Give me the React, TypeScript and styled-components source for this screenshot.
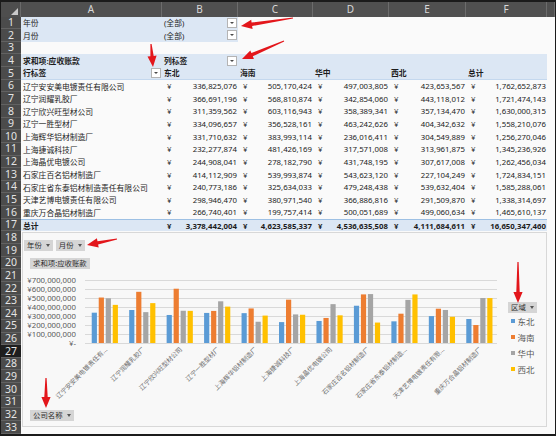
import React from "react";
import styled, { createGlobalStyle, css } from "styled-components";

const GlobalStyle = createGlobalStyle`
  html, body { margin: 0; padding: 0; background: #ffffff; }
  body { font-family: "Noto Sans", "Noto Sans CJK SC", sans-serif; }
`;

const ROW_H = 12.65;
const BLUE = "#dce7f4";

type Row = [string, number[]];

const DATA: Row[] = [
  ["辽宁安安美电镀责任有限公司", [336825076, 505170424, 497003805, 423653567, 1762652873]],
  ["辽宁润耀乳胶厂", [366691196, 568810874, 342854060, 443118012, 1721474143]],
  ["辽宁欣兴旺型材公司", [311359562, 603116943, 358389341, 357134470, 1630000315]],
  ["辽宁一胜型材厂", [334096657, 356528161, 463242626, 404342632, 1558210076]],
  ["上海辉华铝材制造厂", [331710632, 383993114, 236016411, 304549889, 1256270046]],
  ["上海捷诚科技厂", [232277874, 481426169, 317571008, 313961875, 1345236926]],
  ["上海晶优电镀公司", [244908041, 278182790, 431748195, 307617008, 1262456034]],
  ["石家庄百名铝材制造厂", [414112909, 539993874, 543623120, 227104249, 1724834151]],
  ["石家庄省东泰铝材制造责任有限公司", [240773186, 325634033, 479248438, 539632404, 1585288061]],
  ["天津艺博电镀责任有限公司", [298946470, 380971540, 366886816, 291509870, 1338314697]],
  ["重庆万合晶铝材制造厂", [266740401, 199757414, 500051689, 499060634, 1465610137]],
];

const TOTALS = [3378442004, 4623585337, 4536635508, 4111684611, 16650347460];
const REGIONS = ["东北", "海南", "华中", "西北"];
const COLORS = ["#5b9bd5", "#ed7d31", "#a5a5a5", "#ffc000"];

const fmt = (n: number) => n.toLocaleString("en-US");

/* ---------- sheet grid ---------- */

const Frame = styled.div`
  position: relative;
  width: 556px;
  height: 436px;
`;

const Sheet = styled.div`
  width: 556px;
  height: 436px;
  box-sizing: border-box;
  border: 1px solid #1b1b1b;
  border-top-width: 2px;
  border-bottom-width: 2px;
  display: grid;
  grid-template-columns: 20px 141px 76px 75px 76px 77px 81px 1fr;
  grid-template-rows: 14.5px repeat(33, ${ROW_H}px);
  background: #fafafa;
  overflow: hidden;
`;

const Corner = styled.div`
  position: relative;
  background: #4e4e4e;
  border-right: 1px solid #6a6a6a;
  &::after {
    content: "";
    position: absolute;
    right: 2px;
    bottom: 2px;
    border-left: 7px solid transparent;
    border-bottom: 7px solid #c9c9c9;
  }
`;

const ColHead = styled.div`
  background: #505050;
  color: #d9d9d9;
  font-size: 10px;
  display: flex;
  align-items: center;
  justify-content: center;
  border-right: 1px solid #6c6c6c;
  box-sizing: border-box;
`;

const RowHead = styled.div<{ $active?: boolean }>`
  background: ${(p) => (p.$active ? "#1e1e1e" : "#4b4b4b")};
  color: #e4e4e4;
  font-size: 10.5px;
  line-height: 1;
  display: flex;
  align-items: center;
  justify-content: center;
  border-bottom: 1px solid #626262;
  box-sizing: border-box;
`;

const Cell = styled.div<{ $bg?: string; $bold?: boolean; $top?: boolean; $under?: boolean }>`
  display: flex;
  align-items: center;
  min-width: 0;
  padding: 0 1px 0 2px;
  box-sizing: border-box;
  background: ${(p) => p.$bg ?? "transparent"};
  color: #1c1c1c;
  font-size: 7.8px;
  font-weight: ${(p) => (p.$bold ? 700 : 400)};
  white-space: nowrap;
  ${(p) =>
    p.$top &&
    css`
      border-top: 1px solid #9dc0e4;
    `}
  ${(p) =>
    p.$under &&
    css`
      border-bottom: 1px solid #c4d8ee;
    `}
`;

const Money = styled(Cell)`
  justify-content: space-between;
  padding: 0 1px 0 5px;
`;

const DropBtn = styled.span`
  margin-left: auto;
  flex: none;
  width: 10px;
  height: 10px;
  box-sizing: border-box;
  background: #ffffff;
  border: 1px solid #b4b4b4;
  display: flex;
  align-items: center;
  justify-content: center;
  &::after {
    content: "";
    display: block;
    width: 0;
    height: 0;
    border-left: 2px solid transparent;
    border-right: 2px solid transparent;
    border-top: 2.5px solid #4a4a4a;
  }
`;

/* ---------- pivot chart ---------- */

const ChartArea = styled.div`
  grid-column: 2 / 8;
  grid-row: 19 / 35;
  margin: 1px 0 7px 1px;
  background: #f8f8f8;
  border: 1px solid #d8d8d8;
  display: flex;
  flex-direction: column;
  align-items: flex-start;
  padding-top: 6.5px;
  box-sizing: border-box;
  overflow: hidden;
`;

const ButtonRow = styled.div`
  display: flex;
  gap: 3px;
  margin-left: 1px;
`;

const FieldBtn = styled.div<{ $ml?: number; $mt?: number }>`
  display: inline-flex;
  align-items: center;
  gap: 4px;
  height: 11px;
  padding: 0 3px;
  margin-left: ${(p) => p.$ml ?? 0}px;
  margin-top: ${(p) => p.$mt ?? 0}px;
  background: #d5d5d5;
  color: #2e2e2e;
  font-size: 7.4px;
  line-height: 1;
  white-space: nowrap;
`;

const Caret = styled.span`
  width: 0;
  height: 0;
  border-left: 2.5px solid transparent;
  border-right: 2.5px solid transparent;
  border-top: 3px solid #555555;
`;

const PlotRow = styled.div`
  display: flex;
  align-items: flex-start;
  margin-top: 5px;
`;

const Legend = styled.div`
  display: flex;
  flex-direction: column;
  margin-left: 6px;
  padding-top: 28px;
`;

const LegendItem = styled.div`
  display: flex;
  align-items: center;
  height: 16px;
  gap: 2.5px;
  padding-left: 4px;
  color: #595959;
  font-size: 8.5px;
`;

const Swatch = styled.span<{ $c: string }>`
  width: 4px;
  height: 4px;
  background: ${(p) => p.$c};
`;

const BASE = 69;
const PX = 9 / 1e8;
const PLOT_L = 62;
const PLOT_R = 474;
const CAT = (PLOT_R - PLOT_L) / 11;

const shortName = (s: string) => (s.length > 10 ? s.slice(0, 10) + "..." : s);

const Plot = () => (
  <svg width={478} height={134} viewBox="0 0 478 134">
    {Array.from({ length: 8 }, (_, k) => {
      const y = BASE - k * 9 + 0.5;
      return (
        <g key={k}>
          <line x1={PLOT_L} x2={PLOT_R} y1={y} y2={y} stroke="#d9d9d9" strokeWidth={1} />
          <text
            x={53}
            y={y + 2.6}
            textAnchor="end"
            fontSize={7.8}
            fill="#595959"
            fontFamily="Noto Sans, sans-serif"
          >
            {k === 0 ? "¥-" : `¥${fmt(k * 100000000)}`}
          </text>
        </g>
      );
    })}
    {DATA.map(([name, vals], i) => {
      const c = PLOT_L + CAT * (i + 0.5);
      const lx = c + 4;
      const ly = BASE + 7;
      return (
        <g key={name}>
          {vals.slice(0, 4).map((v, j) => {
            const h = v * PX;
            return <rect key={j} x={c - 12 + j * 7} y={BASE - h} width={5.2} height={h} fill={COLORS[j]} />;
          })}
          <text
            x={lx}
            y={ly}
            transform={`rotate(-45 ${lx} ${ly})`}
            textAnchor="end"
            fontSize={6.4}
            fill="#6e6e6e"
            fontFamily="Noto Sans CJK SC, sans-serif"
          >
            {shortName(name)}
          </text>
        </g>
      );
    })}
  </svg>
);

/* ---------- annotation arrows ---------- */

const Overlay = styled.svg`
  position: absolute;
  left: 0;
  top: 0;
  pointer-events: none;
`;

const arrowPoints = (tx: number, ty: number, hx: number, hy: number) => {
  const len = Math.hypot(hx - tx, hy - ty);
  const ux = (hx - tx) / len;
  const uy = (hy - ty) / len;
  const nx = -uy;
  const ny = ux;
  const L = 11;
  const bx = hx - ux * L;
  const by = hy - uy * L;
  const p = (x: number, y: number) => `${x.toFixed(1)},${y.toFixed(1)}`;
  return [
    p(tx + nx * 0.6, ty + ny * 0.6),
    p(bx + nx * 1.7, by + ny * 1.7),
    p(bx + nx * 4.6, by + ny * 4.6),
    p(hx, hy),
    p(bx - nx * 4.6, by - ny * 4.6),
    p(bx - nx * 1.7, by - ny * 1.7),
    p(tx - nx * 0.6, ty - ny * 0.6),
  ].join(" ");
};

const ARROWS: [number, number, number, number][] = [
  [293, 18, 241, 26],
  [284, 41, 242, 59],
  [151, 44, 153, 67],
  [117, 239, 87, 245],
  [518, 262, 518, 303],
  [46, 378, 46, 408],
];

/* ---------- page ---------- */

const App = () => {
  const rows: React.ReactNode[] = [];
  const blank = (key: string, bg?: string) => <Cell key={key} $bg={bg} />;

  // rows 1-2: report filters
  [["年份", "(全部)"], ["月份", "(全部)"]].forEach(([label, val], i) => {
    rows.push(<RowHead key={`h${i + 1}`}>{i + 1}</RowHead>);
    rows.push(<Cell key={`a${i}`} $bg={BLUE}>{label}</Cell>);
    rows.push(
      <Cell key={`b${i}`} $bg={BLUE}>
        {val}
        <DropBtn />
      </Cell>
    );
    for (let c = 0; c < 5; c++) rows.push(blank(`f${i}-${c}`));
  });

  // row 3
  rows.push(<RowHead key="h3">3</RowHead>);
  for (let c = 0; c < 7; c++) rows.push(blank(`r3-${c}`));

  // row 4
  rows.push(<RowHead key="h4">4</RowHead>);
  rows.push(<Cell key="r4a" $bg={BLUE} $bold>求和项:应收账款</Cell>);
  rows.push(
    <Cell key="r4b" $bg={BLUE} $bold>
      列标签
      <DropBtn />
    </Cell>
  );
  for (let c = 0; c < 4; c++) rows.push(blank(`r4-${c}`, BLUE));
  rows.push(blank("r4g"));

  // row 5
  rows.push(<RowHead key="h5">5</RowHead>);
  rows.push(
    <Cell key="r5a" $bg={BLUE} $bold $under>
      行标签
      <DropBtn />
    </Cell>
  );
  [...REGIONS, "总计"].forEach((r) =>
    rows.push(
      <Cell key={`r5-${r}`} $bg={BLUE} $bold $under>
        {r}
      </Cell>
    )
  );
  rows.push(blank("r5g"));

  // data rows 6-16
  DATA.forEach(([name, vals], i) => {
    const n = i + 6;
    rows.push(<RowHead key={`h${n}`}>{n}</RowHead>);
    rows.push(<Cell key={`d${n}a`}>{name}</Cell>);
    vals.forEach((v, j) =>
      rows.push(
        <Money key={`d${n}-${j}`}>
          <span>¥</span>
          <span>{fmt(v)}</span>
        </Money>
      )
    );
    rows.push(blank(`d${n}g`));
  });

  // row 17 totals
  rows.push(<RowHead key="h17">17</RowHead>);
  rows.push(
    <Cell key="t-a" $bg={BLUE} $bold $top>
      总计
    </Cell>
  );
  TOTALS.forEach((v, j) =>
    rows.push(
      <Money key={`t-${j}`} $bg={BLUE} $bold $top>
        <span>¥</span>
        <span>{fmt(v)}</span>
      </Money>
    )
  );
  rows.push(blank("t-g"));

  // rows 18-33 under the chart
  for (let n = 18; n <= 33; n++) {
    rows.push(
      <RowHead key={`h${n}`} $active={n === 27}>
        {n}
      </RowHead>
    );
    rows.push(blank(`g${n}`));
  }

  return (
    <>
      <GlobalStyle />
      <Frame>
        <Sheet>
          <Corner />
          {["A", "B", "C", "D", "E", "F", ""].map((c, i) => (
            <ColHead key={`c${i}`}>{c}</ColHead>
          ))}
          {rows}
          <ChartArea>
            <ButtonRow>
              <FieldBtn>
                年份
                <Caret />
              </FieldBtn>
              <FieldBtn>
                月份
                <Caret />
              </FieldBtn>
            </ButtonRow>
            <FieldBtn $ml={7} $mt={7}>
              求和项:应收账款
            </FieldBtn>
            <PlotRow>
              <Plot />
              <Legend>
                <FieldBtn $ml={1}>
                  区域
                  <Caret />
                </FieldBtn>
                {REGIONS.map((r, i) => (
                  <LegendItem key={r}>
                    <Swatch $c={COLORS[i]} />
                    {r}
                  </LegendItem>
                ))}
              </Legend>
            </PlotRow>
            <FieldBtn $ml={7} $mt={2}>
              公司名称
              <Caret />
            </FieldBtn>
          </ChartArea>
        </Sheet>
        <Overlay width={556} height={436}>
          {ARROWS.map(([tx, ty, hx, hy], i) => (
            <polygon key={i} points={arrowPoints(tx, ty, hx, hy)} fill="#e3161b" />
          ))}
        </Overlay>
      </Frame>
    </>
  );
};

export default App;
